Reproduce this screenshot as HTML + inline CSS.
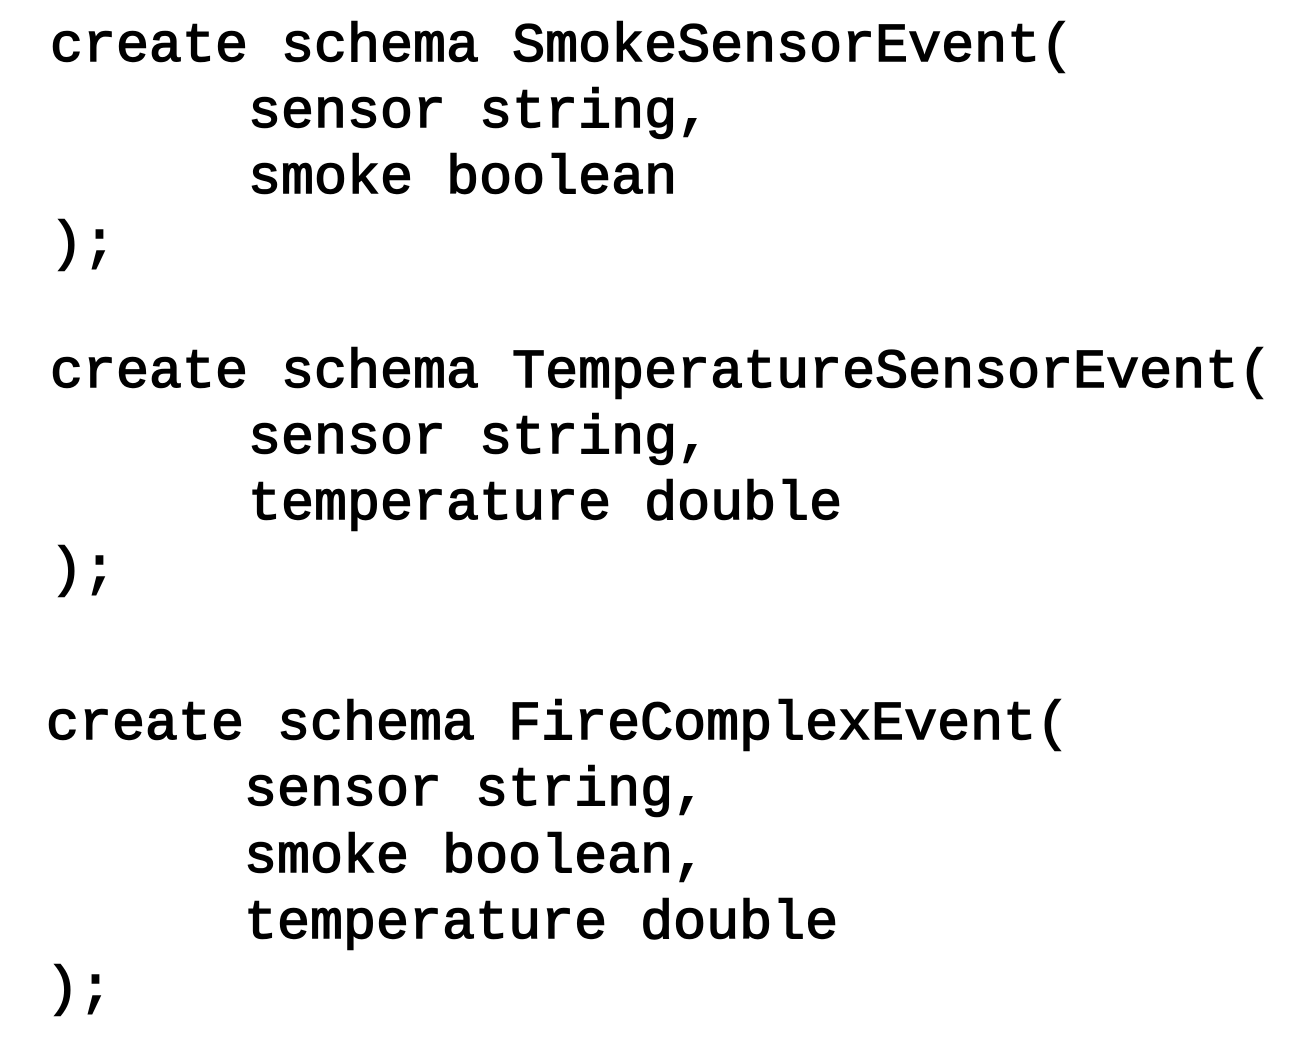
<!DOCTYPE html>
<html><head><meta charset="utf-8"><style>
html,body{margin:0;padding:0;background:#fff;}
body{width:1296px;height:1054px;position:relative;overflow:hidden;}
pre{position:absolute;margin:0;font-family:"Liberation Mono",monospace;font-weight:normal;-webkit-text-stroke:1.5px #000;font-size:55px;line-height:66px;color:#000;}
</style></head><body>
<pre style="left:50px;top:14px;">create schema SmokeSensorEvent(
      sensor string,
      smoke boolean
);</pre>
<pre style="left:50px;top:340px;">create schema TemperatureSensorEvent(
      sensor string,
      temperature double
);</pre>
<pre style="left:46px;top:692px;line-height:66.3px;">create schema FireComplexEvent(
      sensor string,
      smoke boolean,
      temperature double
);</pre>
</body></html>
